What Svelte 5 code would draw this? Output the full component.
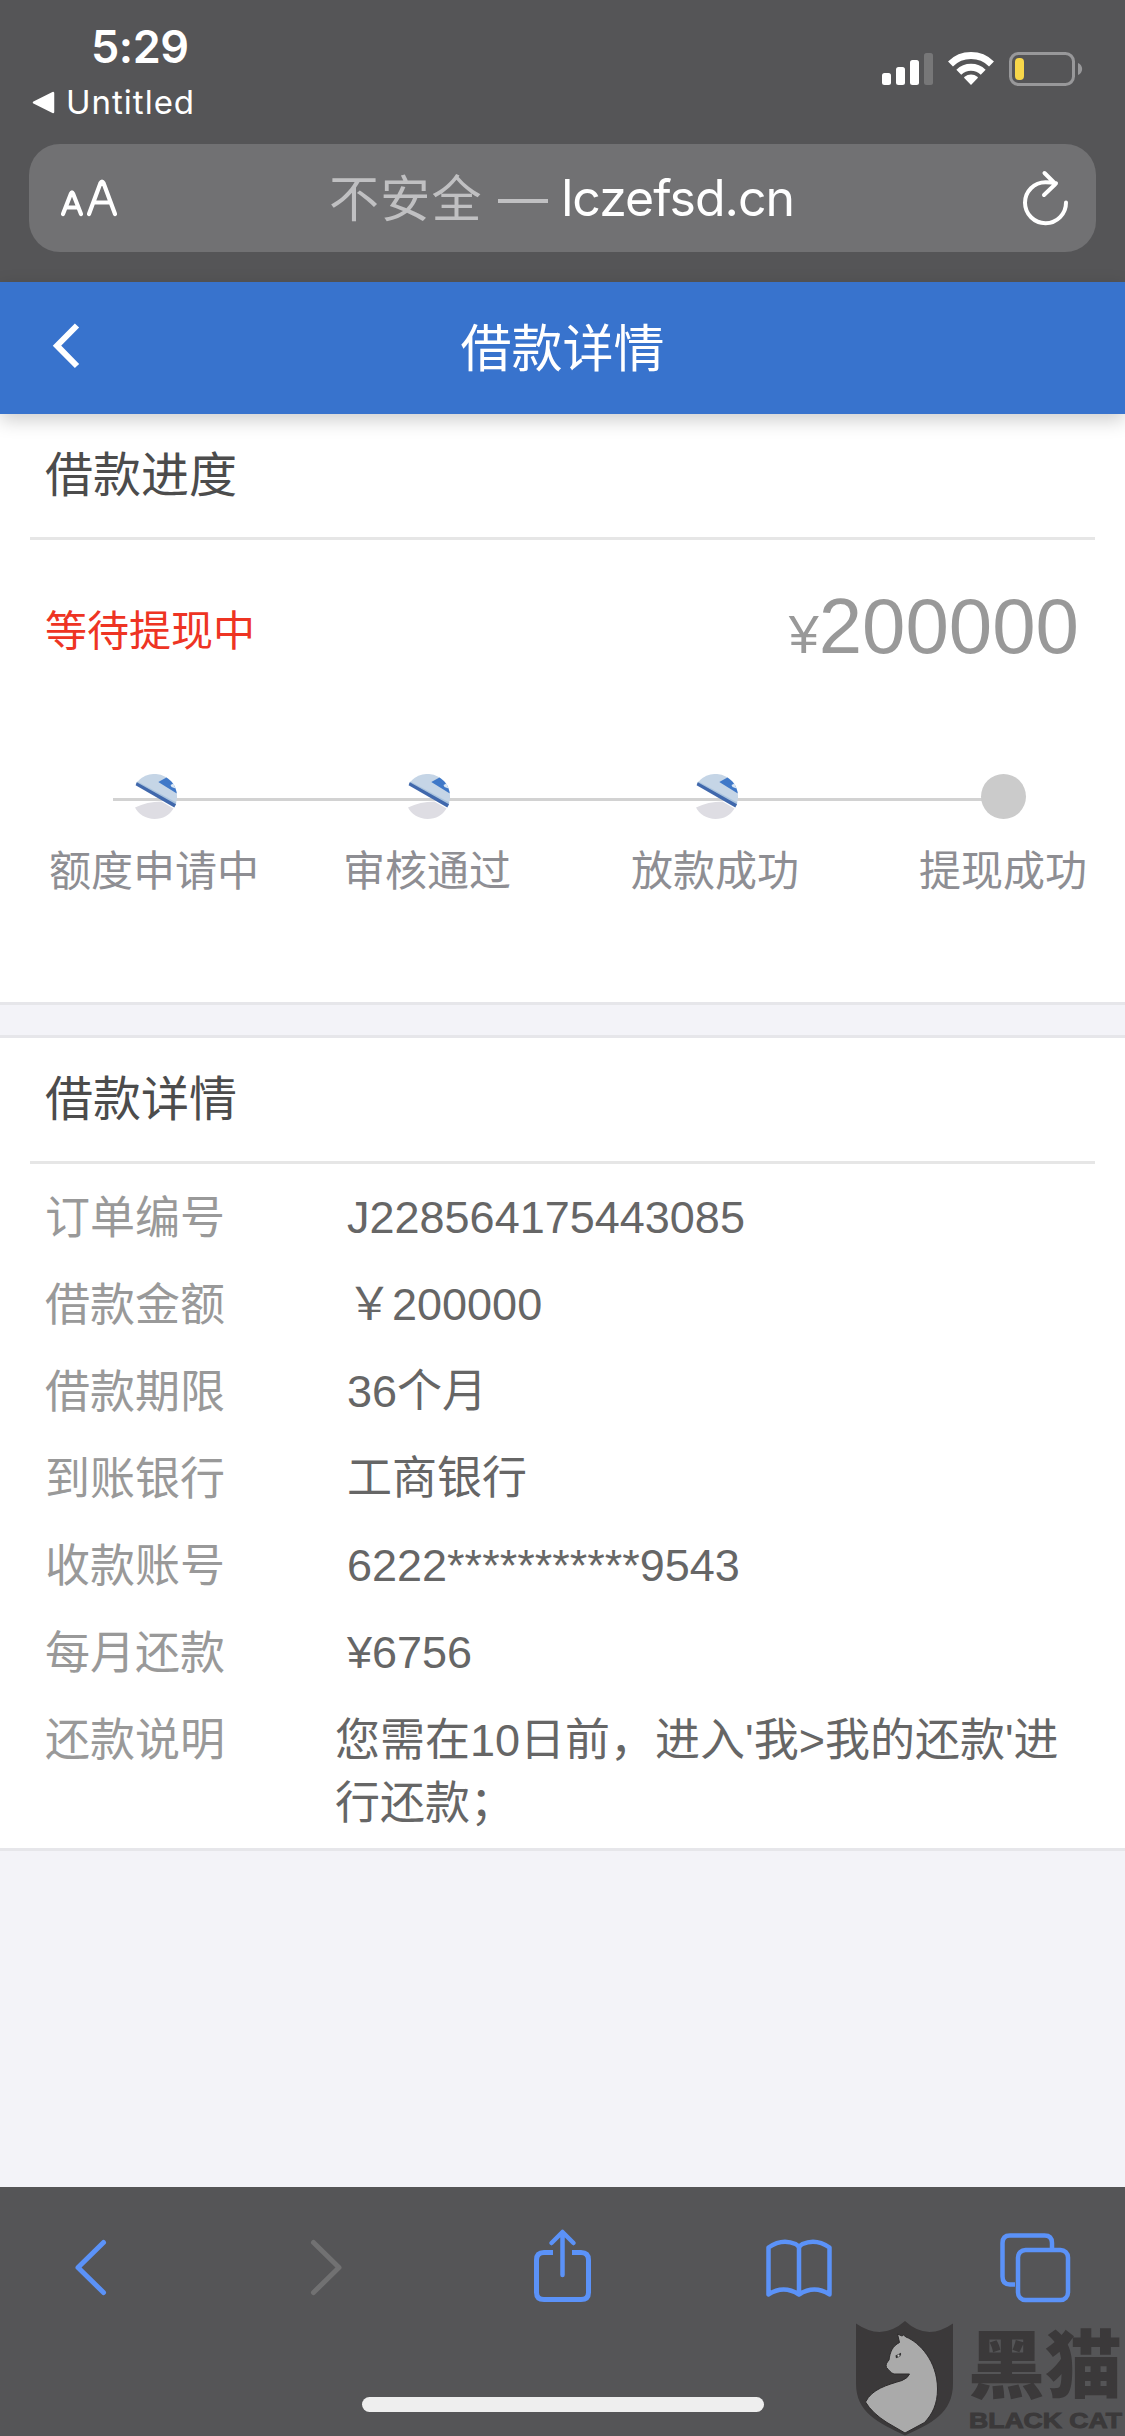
<script>
  const steps = [
    { label: '额度申请中', done: true },
    { label: '审核通过', done: true },
    { label: '放款成功', done: true },
    { label: '提现成功', done: false }
  ];
  const details = [
    { label: '订单编号', value: 'J228564175443085' },
    { label: '借款金额', value: '\uFFE5200000' },
    { label: '借款期限', value: '36个月' },
    { label: '到账银行', value: '工商银行' },
    { label: '收款账号', value: '6222***********9543' },
    { label: '每月还款', value: '\u00A56756' }
  ];
</script>

<div class="screen">
  <div class="browser-top">
    <div class="status">
      <div class="status-left">
        <div class="time">5:29</div>
        <div class="return">
          <svg width="23" height="23" viewBox="0 0 23 23"><path d="M2 11.5 21 2v19z" fill="#fff" stroke="#fff" stroke-width="2.5" stroke-linejoin="round" /></svg>
          <span>Untitled</span>
        </div>
      </div>
      <svg class="indicators" width="204" height="40" viewBox="880 50 204 40">
        <g fill="#fff">
          <rect x="882" y="73" width="9" height="12" rx="2.5" />
          <rect x="896" y="67" width="9" height="18" rx="2.5" />
          <rect x="910" y="60" width="9" height="25" rx="2.5" />
          <rect x="924" y="53" width="9" height="32" rx="2.5" opacity=".2" />
          <path d="M971 85 964.5 78.3a1 1 0 0 1 .1-1.6 10.5 10.5 0 0 1 12.8 0 1 1 0 0 1 .1 1.6z" />
        </g>
        <g fill="none" stroke="#fff" stroke-width="7">
          <path d="M958.8 72.2a17.6 17.6 0 0 1 24.4 0" />
          <path d="M950.5 64a29.2 29.2 0 0 1 41 0" />
        </g>
        <rect x="1010.5" y="53.5" width="63" height="31" rx="8" fill="none" stroke="#98989a" stroke-width="3" />
        <path d="M1078 63c5.500 2 5.500 10 0 12z" fill="#98989a" />
        <rect x="1015" y="58" width="9" height="22" rx="4" fill="#f8d74a" />
      </svg>
    </div>

    <div class="address">
      <svg class="aa" width="60" height="42" viewBox="60 178 60 42" fill="none" stroke="#fff" stroke-width="4.200" stroke-linecap="round" stroke-linejoin="round">
        <path d="M63 215l8-20.500q1-2.500 2 0L81 215M66 208.500h12M89 215l11.500-31q1.500-3 3 0L115 215M93.500 203.500h17" />
      </svg>
      <div class="url"><span class="insecure">不安全 <i class="dash"></i></span><span class="domain">lczefsd.cn</span></div>
      <svg class="reload" width="50" height="60" viewBox="1020 168 50 60" fill="none" stroke="#fff" stroke-width="4" stroke-linecap="round" stroke-linejoin="round">
        <path d="M1066 202.500a20.500 20.500 0 1 1-20.500-20.300q6 0 10.500 1M1044.500 173l11 11-11.500 11" />
      </svg>
    </div>
  </div>

  <header class="titlebar">
    <svg width="30" height="50" viewBox="51 323 30 50"><path d="M77 325.500 57 345.700 77 366" fill="none" stroke="#fff" stroke-width="6" /></svg>
    <h1>借款详情</h1>
  </header>

  <main>
    <section class="progress">
      <h2>借款进度</h2>
      <div class="summary">
        <span class="state">等待提现中</span>
        <span class="amount"><small>¥</small>200000</span>
      </div>
      <ol class="steps">
        {#each steps as step}
          <li>
            {#if step.done}
              <svg class="dot" width="45" height="45" viewBox="0 0 45 45">
                <path d="M4.100 9.500A22.500 22.500 0 0 1 43.300 31z" fill="#c5d5e6" />
                <path d="M5.500 7.500 44.300 28.500 43.500 31.500 4 9.800z" fill="#aac4de" />
                <path d="M4.800 8.200 44 30.300 42.300 33.500 3.600 11.200z" fill="#4068ac" />
                <path d="M26.300 8 34.500 3.500C40 7 43.500 12 44.800 19.500z" fill="#3f78c8" />
                <path d="m38.500 11 3-1.500 2 5-4-1.500z" fill="#dce8f4" />
                <path d="M3 33.500Q15 27.500 29.500 27.500L41.500 34.500C37.500 41 31 45 22.500 45 14 45 6 40 3 33.500z" fill="#dedde3" />
              </svg>
            {:else}
              <span class="dot pending"></span>
            {/if}
            <span>{step.label}</span>
          </li>
        {/each}
      </ol>
    </section>

    <section class="details">
      <h2>借款详情</h2>
      <dl>
        {#each details as row}
          <div class="row"><dt>{row.label}</dt><dd>{row.value}</dd></div>
        {/each}
        <div class="row note"><dt>还款说明</dt><dd>您需在10日前，进入'我&gt;我的还款'进行还款；</dd></div>
      </dl>
    </section>
  </main>

  <footer>
    <svg class="tools" width="1125" height="100" viewBox="0 2217 1125 100" fill="none" stroke="#5b92f8" stroke-width="5" stroke-linecap="round" stroke-linejoin="round">
      <path d="M103.500 2242.500 78 2267.500 103.500 2292.500" />
      <path d="M313.500 2242.500 339 2267.500 313.500 2292.500" stroke="#717172" />
      <path d="M553 2252.500h-9q-7.500 0-7.500 7.500v32.500q0 7 7.500 7h37q7.500 0 7.500-7V2260q0-7.500-7.500-7.500h-9" stroke-linecap="butt" />
      <path d="M562.500 2275v-42.500M551.500 2243l11-11 11 11" stroke-width="4.500" />
      <path d="M768.500 2294.500v-47q13.500-9.500 27-3.500 2.500 1.200 3.500 3.500 1-2.300 3.500-3.500 13.500-6 27 3.500v47q-15-10-30.500 0-15.500-10-30.500 0zM799 2247.500v47" stroke-width="4.500" />
      <path d="M1015 2284.500h-5q-7.500 0-7.500-8v-33.500q0-7.500 7.500-7.500h34.500q7.500 0 7.500 7.500v6" stroke-width="4.500" stroke-linecap="butt" />
      <rect x="1018" y="2250" width="50" height="50" rx="7.500" stroke-width="4.500" />
    </svg>
    <div class="home"></div>
    <div class="watermark">
      <svg width="101" height="118" viewBox="854 2318 101 118">
        <path d="M856 2323.500q26 18 49-2.500 22 20.500 48 2.500v60c0 30-22 40-48 52-27-13-49-23-49-52z" fill="#3b393a" />
        <path d="M897.500 2334 902 2336 903.500 2335 906 2337C919 2342 937.500 2361 937.500 2389c0 15-5 25-13 33.500L905 2433 887 2422.500Q872 2413 865.500 2402C872 2389 887 2385 902 2380.500q6-2.500 7.500-6.500H894c-3.500-1-5-4-7.500-6.500-1-3 0-4.500 2.500-7.500 1-8 3.500-14 10.500-17.500z" fill="#aaa" stroke="#2e2c2d" stroke-width="1" />
        <path d="m895.500 2355.500 5.500-2.700q1 4-5 5.500z" fill="#333" />
        <circle cx="898.500" cy="2355.700" r="1.100" fill="#ccc" />
      </svg>
      <svg width="156" height="136" viewBox="968 2300 156 136" fill="#3b393a">
        <text class="cn" x="968" y="2392" textLength="154" lengthAdjust="spacingAndGlyphs">黑猫</text>
        <text class="en" x="969" y="2428" textLength="153" lengthAdjust="spacingAndGlyphs">BLACK CAT</text>
      </svg>
    </div>
  </footer>
</div>

<style>
  :global(body) { margin: 0; }
  .screen {
    width: 1125px;
    height: 2436px;
    display: flex;
    flex-direction: column;
    overflow: hidden;
    background: #f3f3f8;
    font-family: "Liberation Sans", "Noto Sans CJK SC", sans-serif;
    font-weight: 400;
  }
  h1, h2, ol, dl, dd, dt { margin: 0; padding: 0; font-weight: 400; }
  svg { display: block; flex: none; }
  .browser-top {
    height: 282px;
    flex: none;
    background: #555557;
    color: #fff;
    font-family: Inter, "Noto Sans CJK SC", sans-serif;
  }
  .status {
    height: 144px;
    display: flex;
    justify-content: space-between;
    align-items: flex-start;
    padding: 0 41px 0 32px;
    box-sizing: border-box;
  }
  .status-left { padding-top: 20px; }
  .time { padding-left: 59px; font-size: 45px; font-weight: 600; line-height: 54px; letter-spacing: -.5px; }
  .return { display: flex; align-items: center; gap: 11px; height: 56px; font-size: 33px; letter-spacing: 1px; }
  .indicators { margin-top: 50px; }
  .address {
    height: 108px;
    margin: 0 29px;
    padding: 0 26px 0 31px;
    border-radius: 31px;
    background: #717173;
    display: flex;
    align-items: center;
    justify-content: space-between;
  }
  .url { display: flex; font-size: 50px; white-space: pre; align-items: center; padding-right: 17px; }
  .insecure { color: #c0c0c2; display: flex; align-items: center; margin-top: -7px; letter-spacing: 1.3px; }
  .dash { width: 50px; height: 4px; margin: 12px 13px 0 0; background: #c0c0c2; }
  .domain { letter-spacing: -1px; }
  .titlebar {
    height: 132px;
    flex: none;
    display: grid;
    grid-template-columns: 30px 1fr 30px;
    align-items: center;
    padding: 0 51px;
    background: #3873cd;
    color: #fff;
    box-shadow: 0 6px 18px rgba(0, 0, 0, .2);
    position: relative;
  }
  h1 { font-size: 51px; line-height: 60px; text-align: center; padding-top: 4px; }
  main { flex: 1; }
  section { background: #fff; border-bottom: 3px solid #e6e6ea; box-sizing: border-box; }
  .progress { height: 591px; }
  .details { margin-top: 30px; height: 816px; border-top: 3px solid #e6e6ea; }
  h2 {
    height: 123px;
    line-height: 123px;
    margin: 0 30px;
    padding-left: 15px;
    border-bottom: 3px solid #e6e6e6;
    font-size: 48px;
    color: #4c4c4c;
  }
  .summary {
    height: 180px;
    display: flex;
    justify-content: space-between;
    align-items: center;
    padding: 0 46px 0 45px;
  }
  .state { color: #ee3423; font-size: 42px; padding-bottom: 5px; }
  .amount { color: #999; font-size: 78px; line-height: 90px; }
  .amount small { font-size: 54px; }
  .steps {
    list-style: none;
    display: flex;
    gap: 120px;
    padding: 54px 0 0 49px;
    background: linear-gradient(#d2d2d2, #d2d2d2) 113px 78px / 870px 3px no-repeat;
  }
  .steps li {
    flex: none;
    display: flex;
    flex-direction: column;
    align-items: center;
    gap: 23px;
    font-size: 42px;
    line-height: 60px;
    color: #8e8e93;
  }
  .steps li:first-child { margin-right: -36px; }
  .dot { width: 45px; height: 45px; }
  .pending { border-radius: 50%; background: #cbcbcb; }
  dl { padding-top: 22px; font-size: 45px; line-height: 63px; }
  .row { display: flex; padding-left: 45px; margin-bottom: 24px; height: 63px; }
  dt { width: 302px; flex: none; color: #999; padding-top: 1px; box-sizing: border-box; }
  dd { color: #666; }
  .note dt { width: 290px; }
  .note dd { width: 740px; padding-top: 1px; }
  footer {
    height: 249px;
    flex: none;
    background: #555557;
    position: relative;
    display: flex;
    flex-direction: column;
    align-items: center;
    padding-top: 30px;
    box-sizing: border-box;
  }
  .home { width: 402px; height: 15px; margin-top: 80px; border-radius: 8px; background: #eee; }
  .watermark { position: absolute; right: 1px; bottom: 0; display: flex; align-items: flex-end; gap: 13px; }
  .cn { font: 900 74px "Noto Sans CJK SC", sans-serif; }
  .en { font: 700 22px "Liberation Sans", sans-serif; stroke: #3b393a; stroke-width: 1; }
</style>
